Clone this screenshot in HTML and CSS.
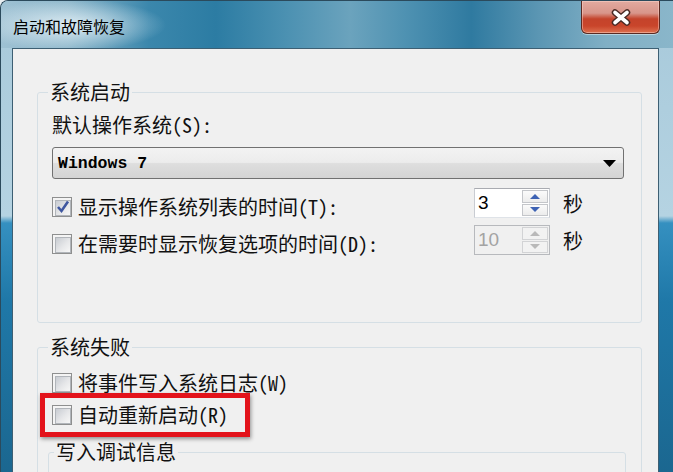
FILE: index.html
```html
<!DOCTYPE html>
<html lang="zh-CN">
<head>
    <meta charset="UTF-8">
    <title>启动和故障恢复</title>
    <link rel="stylesheet" href="styles.css">
</head>
<body>
    <div class="window">
        <div class="titlebar">
            <span class="title">启动和故障恢复</span>
            <button class="close" type="button">
                <svg width="22" height="17" viewBox="0 0 22 17">
                    <path d="M5 3.5 L17 13.5 M17 3.5 L5 13.5" stroke="#4a2a24" stroke-width="6.5" stroke-linecap="round"/>
                    <path d="M5 3.5 L17 13.5 M17 3.5 L5 13.5" stroke="#fff" stroke-width="3.6" stroke-linecap="round"/>
                </svg>
            </button>
        </div>
        <div class="frame">
            <div class="client">
                <!-- 系统启动 -->
                <fieldset class="group boot">
                    <legend>系统启动</legend>
                    <div class="label">默认操作系统(S):</div>
                    <div class="combo">
                        <span class="combo-text">Windows 7</span>
                        <svg class="combo-arrow" width="13" height="7" viewBox="0 0 13 7"><polygon points="0,0 13,0 6.5,7" fill="#000"/></svg>
                    </div>
                    <div class="row first">
                        <label class="check">
                            <span class="box checked">
                                <svg width="16" height="16" viewBox="0 0 16 16"><path d="M3 8 L6.5 12 L13 2.5" fill="none" stroke="#3f57a0" stroke-width="2.6"/></svg>
                            </span>
                            显示操作系统列表的时间(T):
                        </label>
                        <div class="spin">
                            <span class="val">3</span>
                            <span class="btns">
                                <span class="btn"><i class="up"></i></span>
                                <span class="btn"><i class="down"></i></span>
                            </span>
                        </div>
                        <span class="unit">秒</span>
                    </div>
                    <div class="row">
                        <label class="check">
                            <span class="box"></span>
                            在需要时显示恢复选项的时间(D):
                        </label>
                        <div class="spin disabled">
                            <span class="val">10</span>
                            <span class="btns">
                                <span class="btn"><i class="up"></i></span>
                                <span class="btn"><i class="down"></i></span>
                            </span>
                        </div>
                        <span class="unit">秒</span>
                    </div>
                </fieldset>

                <!-- 系统失败 -->
                <fieldset class="group fail">
                    <legend>系统失败</legend>
                    <label class="check log">
                        <span class="box"></span>
                        将事件写入系统日志(W)
                    </label>
                    <div class="mark">
                        <label class="check">
                            <span class="box"></span>
                            自动重新启动(R)
                        </label>
                    </div>
                    <fieldset class="sub">
                        <legend>写入调试信息</legend>
                    </fieldset>
                </fieldset>
            </div>
        </div>
    </div>
</body>
</html>
```

FILE: styles.css
```css
* {
    box-sizing: border-box;
}
body {
    margin: 0;
    width: 673px;
    height: 472px;
    overflow: hidden;
    background: #e8eef1;
    font-family: "Noto Sans Mono CJK SC", "Noto Sans CJK SC", sans-serif;
    font-size: 20px;
    color: #111;
}
.window {
    height: 472px;
    display: flex;
    flex-direction: column;
    border-top: 1px solid #2b4a5c;
    border-left: 1px solid #2b4a5c;
    border-top-left-radius: 8px;
    overflow: hidden;
    background: linear-gradient(180deg, #a7c9da 0, #b5d3e2 215px, #3590c0 222px, #1f78a8 300px, #1b6790 100%);
}
.titlebar {
    height: 47px;
    flex: none;
    display: flex;
    justify-content: space-between;
    align-items: flex-start;
    padding-left: 12px;
    background:
        radial-gradient(ellipse 95px 26px at 70px 24px, rgba(235, 245, 250, 0.85), rgba(235, 245, 250, 0) 100%),
        linear-gradient(90deg, #9ec1d3 0, #8cb6ca 10%, #3b87ac 22%, #2c7ca3 32%, #4a90b1 42%, #6ba3bd 52%, #4f92b2 60%, #2f7aa0 70%, #5b96b3 80%, #80afc5 90%, #8ab6ca 100%);
}
.title {
    font-family: "Noto Sans CJK SC", sans-serif;
    font-size: 16px;
    line-height: 20px;
    margin-top: 15px;
    color: #000;
}
.close {
    width: 79px;
    height: 33px;
    margin-right: 13px;
    padding: 0;
    border: 1px solid #5a2a22;
    border-top: none;
    border-radius: 0 0 6px 6px;
    background: linear-gradient(180deg, #e2aaa0 0, #d8958a 38%, #c4432b 56%, #c9452b 78%, #dd7150 100%);
    box-shadow: inset 0 0 0 1px rgba(255, 220, 210, 0.45), 0 1px 0 rgba(255, 255, 255, 0.45);
    display: flex;
    align-items: center;
    justify-content: center;
}
.frame {
    flex: 1;
    display: flex;
    padding: 0 14px 0 11px;
}
.client {
    flex: 1;
    background: #f0f0f0;
    border: 1px solid #3d5f73;
    padding: 0 16px 0 24px;
}
.group {
    margin: 33px 0 0;
    padding: 0 16px 67px 14px;
    border: 1px solid #d5dfe5;
    border-radius: 3px;
    min-width: 0;
}
.group legend {
    padding: 0 2px;
    margin-left: -4px;
    line-height: 20px;
}
.label {
    margin-top: 11px;
    line-height: 24px;
}
.combo {
    margin: 10px 1px 0 0;
    height: 32px;
    border: 1px solid #717171;
    border-radius: 3px;
    background: linear-gradient(180deg, #f3f3f3 0, #ececec 48%, #dedede 52%, #d4d4d4 100%);
    display: flex;
    align-items: center;
    padding: 0 7px 0 5px;
}
.combo-text {
    flex: 1;
    font-family: "Liberation Mono", monospace;
    font-weight: bold;
    font-size: 16.5px;
    color: #000;
}
.row {
    display: grid;
    grid-template-columns: 409px 76px auto;
    column-gap: 13px;
    height: 30px;
    margin-top: 7px;
}
.row.first {
    margin-top: 9px;
}
.check {
    display: flex;
    align-items: center;
    gap: 6px;
    line-height: 24px;
    white-space: nowrap;
}
.row .check {
    align-self: start;
    margin-top: 7px;
}
.box {
    width: 20px;
    height: 20px;
    flex: none;
    border: 1px solid #8e8f8f;
    background: #f4f4f4;
    padding: 2px;
    position: relative;
}
.box::before {
    content: "";
    display: block;
    width: 100%;
    height: 100%;
    border: 1px solid #b1b5ba;
    background: linear-gradient(135deg, #c8ccd2 0, #e6e7e9 55%, #f7f7f7 100%);
}
.box svg {
    position: absolute;
    left: 2px;
    top: 1px;
}
.spin {
    display: flex;
    height: 30px;
    border: 1px solid;
    border-color: #a9abb1 #c9ccd2 #dfe3e8 #c9ccd2;
    background: #fff;
}
.val {
    flex: 1;
    padding-left: 3px;
    font-family: "Liberation Sans", sans-serif;
    font-size: 19px;
    line-height: 28px;
    color: #000;
}
.btns {
    width: 27px;
    display: flex;
    flex-direction: column;
    padding: 1px 1px 1px 0;
    gap: 1px;
}
.btn {
    flex: 1;
    display: flex;
    align-items: center;
    justify-content: center;
    border: 1px solid #c4c6ca;
    background: linear-gradient(180deg, #fbfbfb 0, #ececec 100%);
}
.btn i {
    width: 0;
    height: 0;
    border-left: 5px solid transparent;
    border-right: 5px solid transparent;
}
.up {
    border-bottom: 5px solid #3d62b4;
}
.down {
    border-top: 5px solid #3d62b4;
}
.spin.disabled {
    background: #f0f0f0;
    border-color: #b7b9bd;
}
.spin.disabled .val {
    color: #a3a3a3;
}
.spin.disabled .btn {
    border-color: #d2d3d5;
    background: #f2f2f2;
}
.spin.disabled .up {
    border-bottom-color: #b9b9b9;
}
.spin.disabled .down {
    border-top-color: #b9b9b9;
}
.unit {
    align-self: center;
    line-height: 24px;
}
.fail {
    margin-top: 14px;
    padding-bottom: 0;
    height: 200px;
}
.log {
    margin-top: 14px;
}
.mark {
    width: max-content;
    margin: -2px 0 0 -12px;
    padding: 5px 17px 5px 7px;
    border: 5px solid #e3131b;
    box-shadow: 1px 2px 4px rgba(0, 0, 0, 0.4);
}
.sub {
    margin: 5px -1px 0 -4px;
    padding: 0 10px 0 9px;
    height: 120px;
    border: 1px solid #d5dfe5;
    border-radius: 3px;
    min-width: 0;
}
.sub legend {
    padding: 0 2px;
    line-height: 20px;
}
```
